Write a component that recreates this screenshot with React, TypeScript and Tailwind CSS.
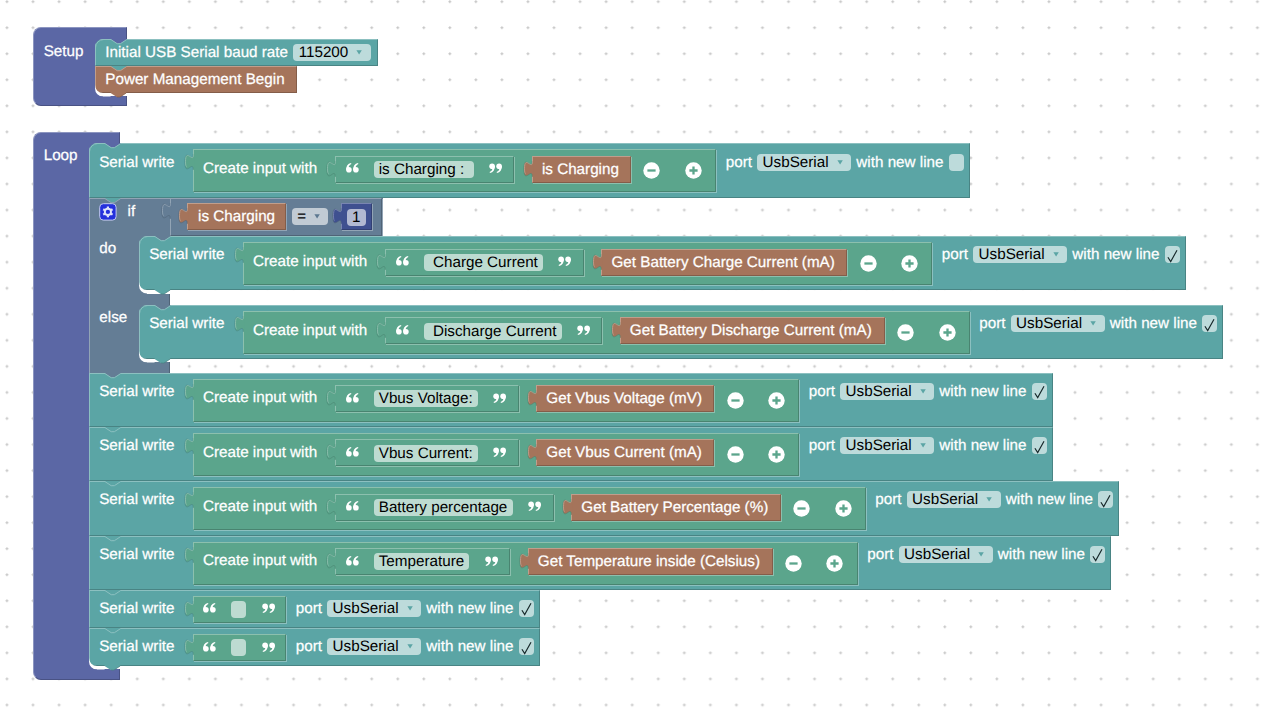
import React from "react";

type Tone = { fill: string; light: string; dark: string; body: string };

const TONES: Record<string, Tone> = {
  indigo: { fill: "#5b67a5", light: "#8c95c0", dark: "#495284", body: "bg-[#5b67a5] border-l-[#8c95c0] border-t-[#8c95c0] border-r-[#495284] border-b-[#495284]" },
  teal: { fill: "#5ba5a5", light: "#8cc0c0", dark: "#498484", body: "bg-[#5ba5a5] border-l-[#8cc0c0] border-t-[#8cc0c0] border-r-[#498484] border-b-[#498484]" },
  green: { fill: "#5ba58c", light: "#8cc0ae", dark: "#498470", body: "bg-[#5ba58c] border-l-[#8cc0ae] border-t-[#8cc0ae] border-r-[#498470] border-b-[#498470]" },
  brown: { fill: "#a5745b", light: "#c09e8c", dark: "#845d49", body: "bg-[#a5745b] border-l-[#c09e8c] border-t-[#c09e8c] border-r-[#845d49] border-b-[#845d49]" },
  slate: { fill: "#647d95", light: "#92a4b5", dark: "#506477", body: "bg-[#647d95] border-l-[#92a4b5] border-t-[#92a4b5] border-r-[#506477] border-b-[#506477]" },
  navy: { fill: "#3f5090", light: "#7985b1", dark: "#324073", body: "bg-[#3f5090] border-l-[#7985b1] border-t-[#7985b1] border-r-[#324073] border-b-[#324073]" },
};

const T = ({ children, className = "" }: { children: React.ReactNode; className?: string }) => (
  <span className={`block shrink-0 whitespace-pre leading-[17px] text-white [-webkit-text-stroke:0.25px_white] ${className}`}>{children}</span>
);

const Notch = ({ over, line }: { over: string; line: string }) => (
  <svg className="absolute left-[15.6px] top-0" width="16" height="6" viewBox="0 0 16 6">
    <path d="M0 0 H15.6 V0.6 L9.4 4.6 H6.2 L0 0.6 Z" fill={over} />
    <path d="M0 0.6 L6.2 4.7 H9.4 L15.6 0.6" fill="none" stroke={line} />
  </svg>
);

const TopCorner = ({ over, line }: { over: string; line: string }) => (
  <svg className="absolute left-0 top-0" width="9" height="9" viewBox="0 0 9 9">
    <path d="M0 0 H8.5 A8 8 0 0 0 0 8.5 Z" fill={over} />
    <path d="M8.8 0.5 A8.3 8.3 0 0 0 0.5 8.8" fill="none" stroke={line} />
  </svg>
);

const BottomEnd = ({ tone, parent }: { tone: Tone; parent: Tone }) => (
  <svg className="absolute bottom-[-5px] left-0 z-10" width="32" height="14" viewBox="0 0 32 14">
    <path d="M0 1 A8 8 0 0 0 8 9 H15.6 V12.5 H0 Z" fill="#fff" />
    <path d="M0 4.5 A8 8 0 0 0 8 12.5 V14 H0 Z" fill={parent.fill} />
    <path d="M15.6 8 V9 L21.8 13 H25 L31.2 9 V8 Z" fill={tone.fill} />
    <path d="M22 13 H25 L31.2 9" fill="none" stroke={tone.dark} strokeWidth="0.8" />
  </svg>
);

const Tab = ({ tone, parent }: { tone: Tone; parent: Tone }) => (
  <svg className="absolute left-[-10px] top-[-1px]" width="12" height="24" viewBox="0 0 12 24">
    <path d="M9.2 5.2 c0 10.4 -8.3 -8.3 -8.3 7.8 s8.3 -2.6 8.3 7.8 H10.6 V5.2 Z" fill={tone.fill} />
    <path d="M9.2 5.2 c0 10.4 -8.3 -8.3 -8.3 7.8 s8.3 -2.6 8.3 7.8" fill="none" stroke={parent.dark} strokeWidth="0.6" />
    <path d="M9.5 5.2 c0 10.4 -8 -7.4 -8 7.6 c0 3.4 0.5 4.6 1.2 5" fill="none" stroke={tone.light} strokeWidth="0.9" />
  </svg>
);

const Value = ({ tone, parent, className, children }: { tone: string; parent: string; className: string; children: React.ReactNode }) => (
  <div
    className={`relative flex shrink-0 items-start border ${TONES[tone].body} ${className}`}
    style={{ boxShadow: `1px 1px 0 ${TONES[parent].light}` }}
  >
    <Tab tone={TONES[tone]} parent={TONES[parent]} />
    {children}
  </div>
);

const Field = ({ children, className = "" }: { children?: React.ReactNode; className?: string }) => (
  <span className={`flex h-[17px] shrink-0 items-center whitespace-pre rounded-[4px] bg-white/60 leading-[17px] text-black ${className}`}>{children}</span>
);

const Arrow = ({ className }: { className: string }) => (
  <svg className={`shrink-0 ${className}`} width="6" height="5" viewBox="0 0 6 5">
    <path d="M0.4 0.2 H5.8 L3.1 4.6 Z" fill="currentColor" />
  </svg>
);

const Quote = ({ close = false, className = "" }: { close?: boolean; className?: string }) => (
  <svg className={`shrink-0 ${close ? "rotate-180" : ""} ${className}`} width="13" height="10" viewBox="0 0 13 10">
    <g fill="#fff">
      <circle cx="2.9" cy="6.8" r="2.8" />
      <path d="M0.1 7 C0 3.2 1.8 0.7 5 0 L5.4 0.9 C3.4 1.8 2.6 3 2.6 5 Z" />
      <circle cx="9.9" cy="6.8" r="2.8" />
      <path d="M7.1 7 C7 3.2 8.8 0.7 12 0 L12.4 0.9 C10.4 1.8 9.6 3 9.6 5 Z" />
    </g>
  </svg>
);

const Round = ({ plus = false, className }: { plus?: boolean; className: string }) => (
  <svg className={`mt-[12.1px] shrink-0 ${className}`} width="17" height="17" viewBox="0 0 17 17">
    <circle cx="8.5" cy="8.5" r="8.2" fill="#fff" />
    <path d={plus ? "M4.4 8.5 H12.6 M8.5 4.4 V12.6" : "M4.4 8.5 H12.6"} stroke="#5ba58c" strokeWidth="2.3" />
  </svg>
);

const Str = ({ text, parent, className }: { text?: string; parent: string; className: string }) => (
  <Value tone="green" parent={parent} className={`h-[27px] pl-[9.8px] ${className}`}>
    <Quote className="mt-[6.6px]" />
    <Field className={text ? "ml-[15px] mt-[4.2px] px-[5.2px]" : "ml-[15px] mt-[4.2px] w-[15px]"}>{text}</Field>
    <Quote close className="ml-[15.3px] mt-[6.6px]" />
  </Value>
);

const Port = ({ checked = true }: { checked?: boolean }) => (
  <>
    <T className="ml-[9.6px] mt-[9.15px]">port</T>
    <Field className="ml-[5.2px] mt-[9.15px] w-[94px] pl-[5.4px]">
      UsbSerial
      <Arrow className="ml-[8.4px] text-[#5ba5a5]" />
    </Field>
    <T className="ml-[5.2px] mt-[9.15px]">with new line</T>
    <Field className="ml-[5.2px] mt-[9.15px] w-[15px] justify-center">
      {checked && (
        <svg className="mt-[2px]" width="11" height="14" viewBox="0 0 11 14">
          <path d="M0.9 8.2 L3.7 12.6 L10 1.2" fill="none" stroke="#17282a" strokeWidth="1.15" />
        </svg>
      )}
    </Field>
  </>
);

type WriteProps = {
  first?: boolean;
  last?: boolean;
  parent: string;
  above: string;
  size: string;
  children: React.ReactNode;
  checked?: boolean;
};

const TopCornerOuter = ({ parent, tone }: { parent: string; tone: string }) => (
  <div className="absolute -left-px -top-px">
    <TopCorner over={TONES[parent].fill} line={TONES[tone].light} />
  </div>
);
const NotchOuter = ({ above, tone }: { above: string; tone: string }) => (
  <div className="absolute -left-px -top-px">
    <Notch over={TONES[above].fill} line={TONES[tone].light} />
  </div>
);
const EndOuter = ({ tone, parent }: { tone: string; parent: string }) => (
  <div className="absolute -bottom-px -left-px">
    <BottomEnd tone={TONES[tone]} parent={TONES[parent]} />
  </div>
);

const Write = ({ first, last, parent, above, size, children, checked }: WriteProps) => (
  <div className={`relative flex shrink-0 items-start border pl-[8.9px] ${TONES.teal.body} ${size}`}>
    {first && <TopCornerOuter parent={parent} tone="teal" />}
    <NotchOuter above={above} tone="teal" />
    <T className="mt-[9.15px]">Serial write</T>
    {children}
    <Port checked={checked} />
    {last && <EndOuter tone="teal" parent={parent} />}
  </div>
);

const Join = ({ text, value, width, strWidth, valueWidth }: { text: string; value: string; width: string; strWidth: string; valueWidth: string }) => (
  <Value tone="green" parent="teal" className={`ml-[18.2px] mt-[5px] h-[43px] pl-[9.3px] ${width}`}>
    <T className="mt-[9.65px]">Create input with</T>
    <Str text={text} parent="green" className={`ml-[17.6px] mt-[5.4px] ${strWidth}`} />
    <Value tone="brown" parent="green" className={`ml-[17.4px] mt-[5.4px] h-[27px] pl-[9.2px] ${valueWidth}`}>
      <T className="mt-[4px]">{value}</T>
    </Value>
    <Round className="ml-[12.2px]" />
    <Round plus className="ml-[24.6px]" />
  </Value>
);

const Gear = () => (
  <svg className="mt-[4px] shrink-0" width="18" height="18" viewBox="0 0 18 18">
    <rect x="0.7" y="0.7" width="16.4" height="16.4" rx="3.6" fill="#2430dc" stroke="#c3caf0" />
    <g transform="translate(8.9 8.9)" stroke="#dfe3fa" fill="none">
      <circle r="3.1" strokeWidth="1.9" />
      {[0, 60, 120, 180, 240, 300].map((a) => (
        <path key={a} d="M0 -3.6 V-5.4" strokeWidth="2.2" transform={`rotate(${a})`} />
      ))}
    </g>
  </svg>
);

const IfBlock = () => (
  <div className="relative flex h-[175.1px] w-[294px] shrink-0">
    <Notch over={TONES.teal.fill} line={TONES.slate.light} />
    <div className="flex w-[50px] shrink-0 flex-col border-l border-t border-[#92a4b5] bg-[#647d95] pl-[9px]">
      <div className="flex h-[38px]">
        <Gear />
        <T className="ml-[10.3px] mt-[4.2px]">if</T>
      </div>
      <T className="mt-[3.8px]">do</T>
      <T className="mt-[52px]">else</T>
    </div>
    <div className="flex shrink-0 flex-col">
      <div className="flex h-[38.7px] w-[243.5px] bg-[#647d95]">
        <div className="w-[31px] border-t border-[#92a4b5]" />
        <Value tone="slate" parent="slate" className="h-[38.5px] w-[212px] pl-[16.2px]">
          <Value tone="brown" parent="slate" className="mt-[4.8px] h-[27px] w-[99px] pl-[9.6px]">
            <T className="mt-[4px]">is Charging</T>
          </Value>
          <Field className="ml-[5.5px] mt-[9.4px] w-[36.5px] pl-[5.2px]">
            =<Arrow className="ml-[8px] text-[#5c7890]" />
          </Field>
          <Value tone="navy" parent="slate" className="ml-[12.8px] mt-[4.8px] h-[27px] w-[31px] pl-[4.4px]">
            <Field className="mt-[4.4px] w-[19px] justify-center">1</Field>
          </Value>
        </Value>
      </div>
      <Write first last parent="slate" above="slate" size="h-[54.2px] w-[1047px]">
        <Join text=" Charge Current" value="Get Battery Charge Current (mA)" width="w-[689.5px]" strWidth="w-[199.2px]" valueWidth="w-[246px]" />
      </Write>
      <div className="mt-[3.2px] h-[11.5px] w-[31px] border-r border-[#506477] bg-[#647d95]" />
      <Write first last parent="slate" above="slate" size="h-[54.2px] w-[1084.2px]">
        <Join text=" Discharge Current" value="Get Battery Discharge Current (mA)" width="w-[727px]" strWidth="w-[217.5px]" valueWidth="w-[265.2px]" />
      </Write>
      <div className="mt-[3.2px] h-[10.3px] w-[31px] border-r border-[#506477] bg-[#647d95]" />
    </div>
  </div>
);

const ROWS = [
  { text: "Vbus Voltage:", value: "Get Vbus Voltage (mV)", size: "h-[54.3px] w-[963.5px]", width: "w-[606.5px]", s: "w-[184px]", v: "w-[178.2px]", above: "slate" },
  { text: "Vbus Current:", value: "Get Vbus Current (mA)", size: "h-[54.3px] w-[963.5px]", width: "w-[606.5px]", s: "w-[184px]", v: "w-[178.2px]", above: "teal" },
  { text: "Battery percentage", value: "Get Battery Percentage (%)", size: "h-[54.3px] w-[1030px]", width: "w-[673px]", s: "w-[219px]", v: "w-[209.6px]", above: "teal" },
  { text: "Temperature", value: "Get Temperature inside (Celsius)", size: "h-[54.3px] w-[1022px]", width: "w-[665px]", s: "w-[175.5px]", v: "w-[245px]", above: "teal" },
];

export default function App() {
  return (
    <main className="relative h-[714px] w-[1261px] overflow-hidden bg-white pl-[33.3px] pt-[27.3px] font-['Liberation_Sans',Arial,sans-serif] text-[15.22px] [text-rendering:geometricPrecision]">
      <svg className="absolute left-0 top-0" width="1261" height="714">
        <defs>
          <pattern id="dots" x="5.2" y="0" width="26.05" height="26.05" patternUnits="userSpaceOnUse">
            <path d="M0.3 1.7 H3.3 M1.8 0.2 V3.2" stroke="#c4c4c4" strokeWidth="1.1" />
          </pattern>
        </defs>
        <rect width="1261" height="714" fill="url(#dots)" />
      </svg>
      <section className="relative flex h-[79px]">
        <div className="w-[62px] shrink-0 rounded-l-[8px] border-b border-l border-t border-b-[#495284] border-l-[#8c95c0] border-t-[#8c95c0] bg-[#5b67a5] pl-[9.4px] pt-[14.8px]">
          <T>Setup</T>
        </div>
        <div className="flex flex-col items-start">
          <div className="h-[11.7px] w-[31.5px] border-r border-t border-r-[#495284] border-t-[#8c95c0] bg-[#5b67a5]" />
          <div className={`relative flex h-[27px] w-[282.5px] border pl-[9px] ${TONES.teal.body}`}>
            <TopCornerOuter parent="indigo" tone="teal" />
            <NotchOuter above="indigo" tone="teal" />
            <T className="mt-[4px]">Initial USB Serial baud rate</T>
            <Field className="ml-[5px] mt-[4px] w-[78px] pl-[5.6px]">
              115200
              <Arrow className="ml-[8px] text-[#5ba5a5]" />
            </Field>
          </div>
          <div className={`relative flex h-[27px] w-[202px] border pl-[9px] ${TONES.brown.body}`}>
            <NotchOuter above="teal" tone="brown" />
            <T className="mt-[4px]">Power Management Begin</T>
            <EndOuter tone="brown" parent="indigo" />
          </div>
          <div className="mt-[2.8px] h-[10.5px] w-[31.5px] border-b border-r border-[#495284] bg-[#5b67a5]" />
        </div>
      </section>
      <section className="relative mt-[25.4px] flex h-[548.3px]">
        <div className="w-[56px] shrink-0 rounded-l-[8px] border-b border-l border-t border-b-[#495284] border-l-[#8c95c0] border-t-[#8c95c0] bg-[#5b67a5] pl-[9.4px] pt-[14.8px]">
          <T>Loop</T>
        </div>
        <div className="flex flex-col items-start">
          <div className="h-[11.6px] w-[31.2px] border-r border-t border-r-[#495284] border-t-[#8c95c0] bg-[#5b67a5]" />
          <Write first parent="indigo" above="indigo" size="h-[54.4px] w-[880.5px] [&>span]:mt-[9.7px]" checked={false}>
            <Join text="is Charging : " value="is Charging" width="w-[523.5px]" strWidth="w-[179.6px]" valueWidth="w-[99px]" />
          </Write>
          <IfBlock />
          {ROWS.map((r) => (
            <Write key={r.text} parent="indigo" above={r.above} size={r.size}>
              <Join text={r.text} value={r.value} width={r.width} strWidth={r.s} valueWidth={r.v} />
            </Write>
          ))}
          <Write parent="indigo" above="teal" size="h-[38.2px] w-[450.5px]">
            <Str parent="teal" className="ml-[18.2px] mt-[5px] w-[93.5px]" />
          </Write>
          <Write last parent="indigo" above="teal" size="h-[38.2px] w-[450.5px]">
            <Str parent="teal" className="ml-[18.2px] mt-[5px] w-[93.5px]" />
          </Write>
          <div className="mt-[2.9px] h-[11px] w-[31.2px] border-b border-r border-[#495284] bg-[#5b67a5]" />
        </div>
      </section>
    </main>
  );
}
